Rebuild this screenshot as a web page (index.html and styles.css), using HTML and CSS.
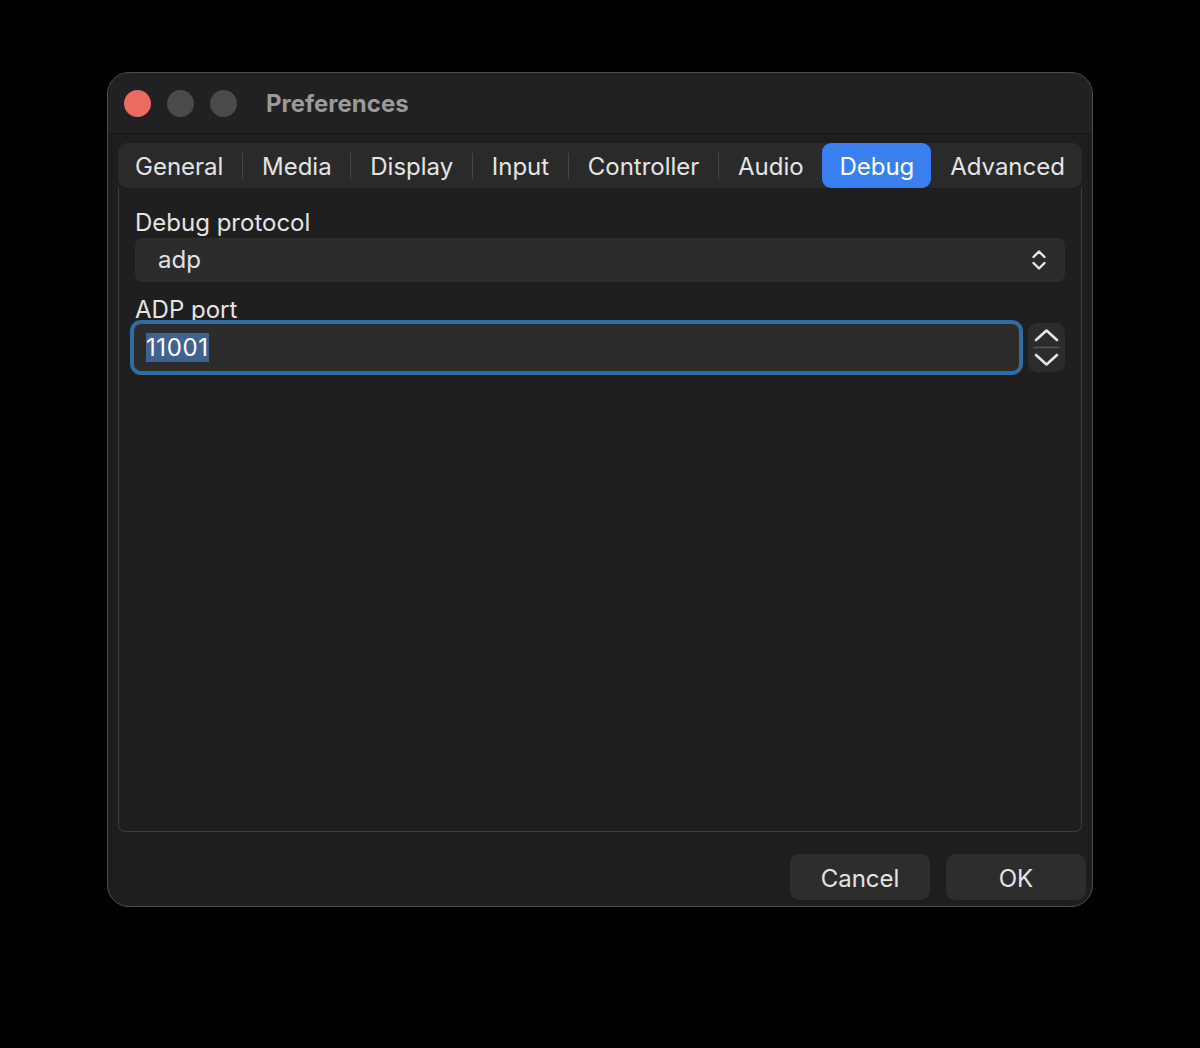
FILE: index.html
```html
<!DOCTYPE html>
<html>
<head>
<meta charset="utf-8">
<title>Preferences</title>
<link rel="stylesheet" href="styles.css">
</head>
<body>
<div class="window">
  <div class="titlebar">
    <div class="lights">
      <span class="light close"></span>
      <span class="light"></span>
      <span class="light"></span>
    </div>
    <div class="title">Preferences</div>
  </div>
  <div class="content">
    <div class="tabwidget">
      <div class="tabbar">
        <span class="tab">General</span>
        <span class="sep"></span>
        <span class="tab">Media</span>
        <span class="sep"></span>
        <span class="tab">Display</span>
        <span class="sep"></span>
        <span class="tab">Input</span>
        <span class="sep"></span>
        <span class="tab">Controller</span>
        <span class="sep"></span>
        <span class="tab">Audio</span>
        <span class="tab active">Debug</span>
        <span class="tab">Advanced</span>
      </div>
      <div class="pane">
        <div class="label">Debug protocol</div>
        <div class="combo">
          <span class="combo-text">adp</span>
          <svg class="updown" width="16" height="24" viewBox="0 0 16 24">
            <path d="M2.5 9 L8 3.5 L13.5 9" fill="none" stroke="#e6e6e6" stroke-width="2.4" stroke-linecap="round" stroke-linejoin="round"/>
            <path d="M2.5 15 L8 20.5 L13.5 15" fill="none" stroke="#e6e6e6" stroke-width="2.4" stroke-linecap="round" stroke-linejoin="round"/>
          </svg>
        </div>
        <div class="label port-label">ADP port</div>
        <div class="spinrow">
          <div class="spinfield"><span class="sel">11001</span></div>
          <div class="spinbtns">
            <svg width="37" height="49" viewBox="0 0 37 49">
              <path d="M8 17 L18.5 7.5 L29 17" fill="none" stroke="#e6e6e6" stroke-width="2.6" stroke-linecap="round" stroke-linejoin="round"/>
              <line x1="5.5" y1="24.5" x2="31.5" y2="24.5" stroke="#555" stroke-width="1.5"/>
              <path d="M8 32 L18.5 41.5 L29 32" fill="none" stroke="#e6e6e6" stroke-width="2.6" stroke-linecap="round" stroke-linejoin="round"/>
            </svg>
          </div>
        </div>
      </div>
    </div>
    <div class="buttons">
      <button class="btn">Cancel</button>
      <button class="btn">OK</button>
    </div>
  </div>
</div>
</body>
</html>
```

FILE: styles.css
```css
html, body {
  margin: 0;
  padding: 0;
  background: #000;
}
body {
  padding: 72px 0 0 107px;
  font-family: Inter, "Noto Sans", "Liberation Sans", sans-serif;
  color: #e2e2e2;
}
.window {
  width: 984px;
  height: 833px;
  border: 1px solid #4e4e4e;
  border-radius: 22px;
  background: #1e1e1e;
  overflow: hidden;
  display: flex;
  flex-direction: column;
}
.titlebar {
  height: 60px;
  background: #212123;
  border-bottom: 1px solid #161616;
  display: flex;
  align-items: center;
  flex: none;
}
.lights {
  display: flex;
  gap: 16px;
  padding-left: 16px;
  padding-top: 1px;
}
.light {
  width: 27px;
  height: 27px;
  border-radius: 50%;
  background: #4a4a4c;
}
.light.close {
  background: #ec6a5f;
}
.title {
  margin-left: 29px;
  font-size: 24px;
  font-weight: 700;
  color: #9a9a9a;
  padding-top: 1px;
}
.content {
  flex: 1;
  padding: 9px 6px 7px 10px;
  display: flex;
  flex-direction: column;
}
.tabwidget {
  width: 964px;
  display: flex;
  flex-direction: column;
}
.tabbar {
  height: 45px;
  background: #2a2a2a;
  border-radius: 9px;
  display: flex;
  align-items: center;
  justify-content: space-between;
  padding: 0;
  font-size: 24px;
  color: #e4e4e4;
}
.tab {
  padding: 0 17px;
  height: 45px;
  line-height: 47px;
  border-radius: 9px;
}
.tab.active {
  background: #3a7ff0;
  color: #fff;
}
.sep {
  width: 1px;
  height: 26px;
  background: #474747;
}
.pane {
  height: 644px;
  border: 1px solid #3e3e3e;
  border-top: none;
  border-radius: 0 0 7px 7px;
  background: #1f1f1f;
  padding: 21px 16px 0 16px;
  box-sizing: border-box;
  font-size: 24px;
}
.label {
  line-height: 28px;
  height: 28px;
  color: #e4e4e4;
}
.combo {
  margin-top: 1px;
  height: 44px;
  background: #2c2c2c;
  border-radius: 8px;
  display: flex;
  align-items: center;
  justify-content: space-between;
  padding: 0 18px 0 23px;
}
.combo-text {
  line-height: 46px;
}
.updown {
  display: block;
}
.port-label {
  margin-top: 14px;
}
.spinrow {
  margin-top: -4px;
  margin-left: -5px;
  display: flex;
  align-items: center;
  gap: 5px;
}
.spinfield {
  flex: 1;
  height: 47px;
  border: 4px solid #316ca2;
  border-radius: 11px;
  background: #2c2c2c;
  display: flex;
  align-items: center;
  padding-left: 12px;
  letter-spacing: 0.6px;
}
.sel {
  background: #3f6391;
  color: #fff;
  line-height: 29px;
  padding: 0 0 0 0;
}
.spinbtns {
  width: 37px;
  height: 49px;
  border-radius: 9px;
  background: #2c2c2c;
  flex: none;
}
.spinbtns svg {
  display: block;
}
.buttons {
  margin-top: 22px;
  display: flex;
  justify-content: flex-end;
  gap: 16px;
}
.btn {
  width: 140px;
  height: 46px;
  border: none;
  border-radius: 9px;
  background: #2d2d2d;
  color: #e4e4e4;
  font-family: Inter, "Noto Sans", "Liberation Sans", sans-serif;
  font-size: 24px;
  padding: 2px 0 0 0;
}
```
